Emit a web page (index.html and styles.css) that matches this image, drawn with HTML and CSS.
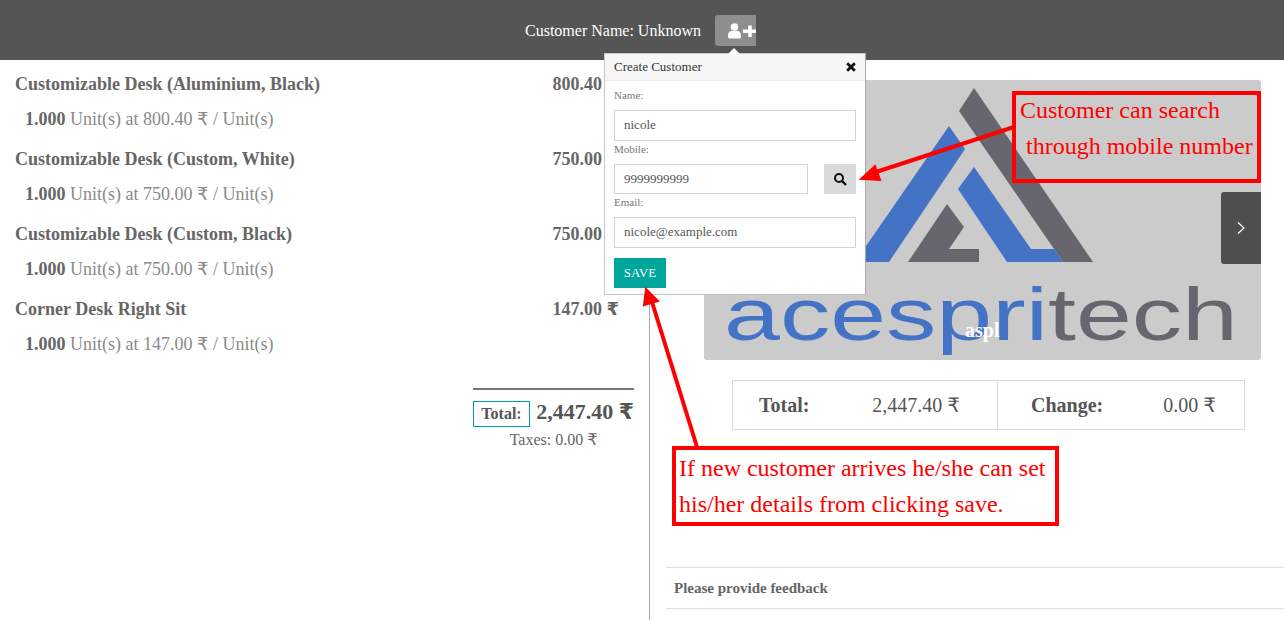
FILE: index.html
```html
<!DOCTYPE html>
<html>
  <head>
    <title>Customer Display</title>
    <link rel="stylesheet" href="styles.css">
  </head>
  <body>
    <div class="topbar">
      <span class="customer-name">Customer Name: Unknown</span>
      <button class="add-customer">
        <svg width="31" height="16" viewBox="0 0 31 16">
          <circle cx="9.500" cy="4" r="3.800" fill="#fff"/>
          <path d="M3 12.500c0-3 1.500-4.500 3.500-4.500h6c2 0 3.500 1.500 3.500 4.500v1.200c0 1-.8 1.800-1.800 1.800h-9.400c-1 0-1.800-.8-1.800-1.800z" fill="#fff"/>
          <path d="M23.200 2.500h3.600v4h4.200v3.600h-4.200v4h-3.600v-4h-5.200v-3.600h5.200z" fill="#fff"/>
        </svg>
      </button>
    </div>

    <div class="content">
      <div class="order">
        <div class="line">
          <div class="line-head"><span>Customizable Desk (Aluminium, Black)</span><span>800.40 <i class="rupee">₹</i></span></div>
          <div class="line-info"><b>1.000</b> Unit(s) at 800.40 <i class="rupee">₹</i> / Unit(s)</div>
        </div>
        <div class="line">
          <div class="line-head"><span>Customizable Desk (Custom, White)</span><span>750.00 <i class="rupee">₹</i></span></div>
          <div class="line-info"><b>1.000</b> Unit(s) at 750.00 <i class="rupee">₹</i> / Unit(s)</div>
        </div>
        <div class="line">
          <div class="line-head"><span>Customizable Desk (Custom, Black)</span><span>750.00 <i class="rupee">₹</i></span></div>
          <div class="line-info"><b>1.000</b> Unit(s) at 750.00 <i class="rupee">₹</i> / Unit(s)</div>
        </div>
        <div class="line">
          <div class="line-head"><span>Corner Desk Right Sit</span><span>147.00 <i class="rupee">₹</i></span></div>
          <div class="line-info"><b>1.000</b> Unit(s) at 147.00 <i class="rupee">₹</i> / Unit(s)</div>
        </div>
        <div class="order-total">
          <div class="total-row"><span class="total-label">Total:</span><span class="total-value">2,447.40 <i class="rupee">₹</i></span></div>
          <div class="taxes">Taxes: 0.00 <i class="rupee">₹</i></div>
        </div>
      </div>

      <div class="side">
        <div class="banner">
          <svg class="logo" width="557" height="280" viewBox="0 0 557 280">
            <path d="M270 8 L255 31 L359 182 L389 182z" fill="#67666e"/>
            <path d="M245 46 L261 69 L185 182 L151 182z" fill="#4472c4"/>
            <path d="M270 87 L254 109 L303 182 L359 182 L350 169 L327 169z" fill="#4472c4"/>
            <path d="M243 124 L260 147 L245 169 L275 169 L275 182 L204 182z" fill="#67666e"/>
            <text x="20" y="260" class="logo-text" textLength="514" lengthAdjust="spacingAndGlyphs"><tspan fill="#4472c4">acespri</tspan><tspan fill="#67666e">tech</tspan></text>
          </svg>
          <span class="banner-caption">aspl</span>
          <span class="banner-next">
            <svg width="10" height="14" viewBox="0 0 10 14"><path d="M2 1.500l6 5.500-6 5.500" fill="none" stroke="#fff" stroke-width="1.200"/></svg>
          </span>
        </div>

        <div class="paid-box">
          <div class="paid-cell paid-total"><b>Total:</b><span>2,447.40 <i class="rupee">₹</i></span></div>
          <div class="paid-cell paid-change"><b>Change:</b><span>0.00 <i class="rupee">₹</i></span></div>
        </div>

        <div class="feedback">Please provide feedback</div>
      </div>
    </div>

    <!-- popover over the page -->
    <div class="popover">
      <div class="popover-arrow"></div>
      <div class="popover-title">
        <span>Create Customer</span>
        <svg width="10" height="10" viewBox="0 0 10 10"><path d="M1.200 1.200l7.600 7.600M8.800 1.200l-7.600 7.600" stroke="#111" stroke-width="2.800"/></svg>
      </div>
      <div class="popover-body">
        <label>Name:</label>
        <input class="field" type="text" value="nicole">
        <label>Mobile:</label>
        <div class="mobile-row">
          <input class="field" type="text" value="9999999999">
          <button class="search-btn">
            <svg width="14" height="14" viewBox="0 0 14 14"><circle cx="6" cy="6" r="4" fill="none" stroke="#111" stroke-width="2"/><path d="M9 9l4 4" stroke="#111" stroke-width="2.400"/></svg>
          </button>
        </div>
        <label>Email:</label>
        <input class="field" type="text" value="nicole@example.com">
        <button class="save-btn">SAVE</button>
      </div>
    </div>

    <!-- screenshot annotations -->
    <svg class="arrows" width="1284" height="620" viewBox="0 0 1284 620">
      <path d="M1014 127 L876 172" stroke="#f00" stroke-width="4"/>
      <path d="M861 179 L875 166 L880 180z" fill="#f00" stroke="#f00" stroke-width="2"/>
      <path d="M697 447 L652 302" stroke="#f00" stroke-width="4"/>
      <path d="M646 289 L644 305 L658 301z" fill="#f00" stroke="#f00" stroke-width="2"/>
    </svg>
    <div class="note note-search"><div class="note-text">Customer can search<br>&nbsp;through mobile number</div></div>
    <div class="note note-save">If new customer arrives he/she can set<br>his/her details from clicking save.</div>
  </body>
</html>
```

FILE: styles.css
```css
body {
  margin: 0;
  height: 620px;
  overflow: hidden;
  background-color: #ffffff;
  font-family: "Liberation Serif", serif;
  color: #555555;
}

.rupee {
  font-family: "DejaVu Sans", sans-serif;
  font-style: normal;
  line-height: 0;
}

/* Top bar */
.topbar {
  height: 60px;
  padding: 15px 3px 0 0;
  box-sizing: border-box;
  background-color: #555555;
  display: flex;
  justify-content: center;
  gap: 14px;
}

.customer-name {
  color: #ffffff;
  font-size: 16px;
  line-height: 31px;
}

.add-customer {
  width: 41px;
  height: 31px;
  padding: 0 0 0 10px;
  border: none;
  border-radius: 3px 0 0 3px;
  background-color: #8e8e8e;
  display: flex;
  align-items: center;
  overflow: hidden;
}

.add-customer svg {
  flex: none;
}

/* Order lines */
.content {
  display: flex;
  height: 560px;
}

.order {
  width: 650px;
  flex: none;
  box-sizing: border-box;
  border-right: 1px solid #a8a8a8;
  padding: 7px 15px 0 15px;
}

.line {
  height: 75px;
}

.line-head {
  display: flex;
  justify-content: space-between;
  padding-right: 15px;
  font-size: 18px;
  font-weight: bold;
  line-height: 35px;
  color: #666666;
}

.line-info {
  padding-left: 10px;
  font-size: 18px;
  line-height: 35px;
  color: #8a8a8a;
}

.line-info b {
  color: #666666;
}

.order-total {
  width: 161px;
  margin: 21px 0 0 auto;
  border-top: 2px solid #777777;
}

.total-row {
  display: flex;
  justify-content: space-between;
  align-items: center;
  margin-top: 11px;
}

.total-label {
  box-sizing: border-box;
  width: 57px;
  height: 26px;
  border: 1px solid #00a09d;
  font-size: 16px;
  font-weight: bold;
  line-height: 24px;
  text-align: center;
}

.total-value {
  font-size: 22px;
  font-weight: bold;
  line-height: 26px;
  margin-top: -4px;
}

.taxes {
  margin: 3px 0 0;
  font-size: 16px;
  line-height: 20px;
  text-align: center;
  color: #666666;
}

/* Right side */
.side {
  flex: 1;
  min-width: 0;
  padding-top: 20px;
}

.banner {
  position: relative;
  width: 557px;
  height: 280px;
  margin-left: 54px;
  background-color: #cbcbcb;
  border-radius: 3px;
}

.logo {
  display: block;
}

.logo-text {
  font-family: "Liberation Sans", sans-serif;
  font-size: 75px;
}

.banner-caption {
  position: absolute;
  left: 261px;
  top: 238px;
  color: #ffffff;
  font-size: 20px;
  font-weight: bold;
  line-height: 24px;
}

.banner-next {
  position: absolute;
  right: 0;
  top: 112px;
  width: 40px;
  height: 72px;
  background-color: #4e4e4e;
  border-radius: 3px 0 0 3px;
  display: flex;
  align-items: center;
  justify-content: center;
}

.paid-box {
  display: flex;
  width: 513px;
  height: 50px;
  box-sizing: border-box;
  margin: 20px 0 0 82px;
  border: 1px solid #d8dadd;
}

.paid-cell {
  display: flex;
  justify-content: space-between;
  align-items: center;
  font-size: 20px;
}

.paid-total {
  width: 264px;
  box-sizing: border-box;
  padding: 0 37px 0 26px;
}

.paid-change {
  flex: 1;
  border-left: 1px solid #d8dadd;
  padding: 0 28px 0 33px;
}

.feedback {
  margin: 137px 0 0 16px;
  height: 42px;
  box-sizing: border-box;
  padding-left: 8px;
  border-top: 1px solid #dee0e4;
  border-bottom: 1px solid #dee0e4;
  font-size: 15px;
  font-weight: bold;
  line-height: 40px;
  color: #666666;
}

/* Popover */
.popover {
  position: absolute;
  left: 604px;
  top: 53px;
  width: 262px;
  height: 242px;
  box-sizing: border-box;
  background-color: #ffffff;
  border: 1px solid #c8c8c8;
  border-right-color: #a8a8a8;
  border-bottom-color: #c0c0c0;
}

.popover-arrow {
  position: absolute;
  left: 123px;
  top: -6px;
  width: 0;
  height: 0;
  border-left: 6px solid transparent;
  border-right: 6px solid transparent;
  border-bottom: 6px solid #ffffff;
}

.popover-title {
  height: 26px;
  padding: 0 9px;
  display: flex;
  justify-content: space-between;
  align-items: center;
  background-color: #f7f7f7;
  border-bottom: 1px solid #ebebeb;
  font-size: 13px;
  color: #333333;
}

.popover-body {
  padding: 8px 9px 0;
}

.popover-body label {
  display: block;
  height: 21px;
  font-size: 11px;
  line-height: 12px;
  color: #777777;
}

.field {
  display: block;
  width: 100%;
  height: 31px;
  box-sizing: border-box;
  padding: 0 9px 2px;
  border: 1px solid #ced4da;
  border-radius: 0;
  margin-bottom: 2px;
  font-family: "Liberation Serif", serif;
  font-size: 13px;
  color: #555555;
}

.mobile-row {
  display: flex;
  justify-content: space-between;
}

.mobile-row .field {
  width: 194px;
  height: 30px;
  padding-bottom: 0;
}

.search-btn {
  width: 32px;
  height: 30px;
  padding: 0;
  border: none;
  background-color: #dadada;
  display: flex;
  align-items: center;
  justify-content: center;
}

.save-btn {
  display: block;
  width: 52px;
  height: 30px;
  margin-top: 10px;
  padding: 0;
  border: none;
  background-color: #00a59b;
  color: #ffffff;
  font-family: "Liberation Serif", serif;
  font-size: 13px;
}

/* Annotations */
.arrows {
  position: absolute;
  left: 0;
  top: 0;
  pointer-events: none;
}

.note {
  position: absolute;
  box-sizing: border-box;
  border: 4px solid #ff0000;
  color: #ff0000;
  font-size: 24px;
  line-height: 35px;
}

.note-search {
  left: 1012px;
  top: 91px;
  width: 249px;
  height: 92px;
  padding-left: 4px;
}

.note-text {
  margin-top: -3px;
  line-height: 36px;
}

.note-save {
  left: 672px;
  top: 446px;
  width: 387px;
  height: 80px;
  padding-left: 3px;
  line-height: 36px;
}
```
